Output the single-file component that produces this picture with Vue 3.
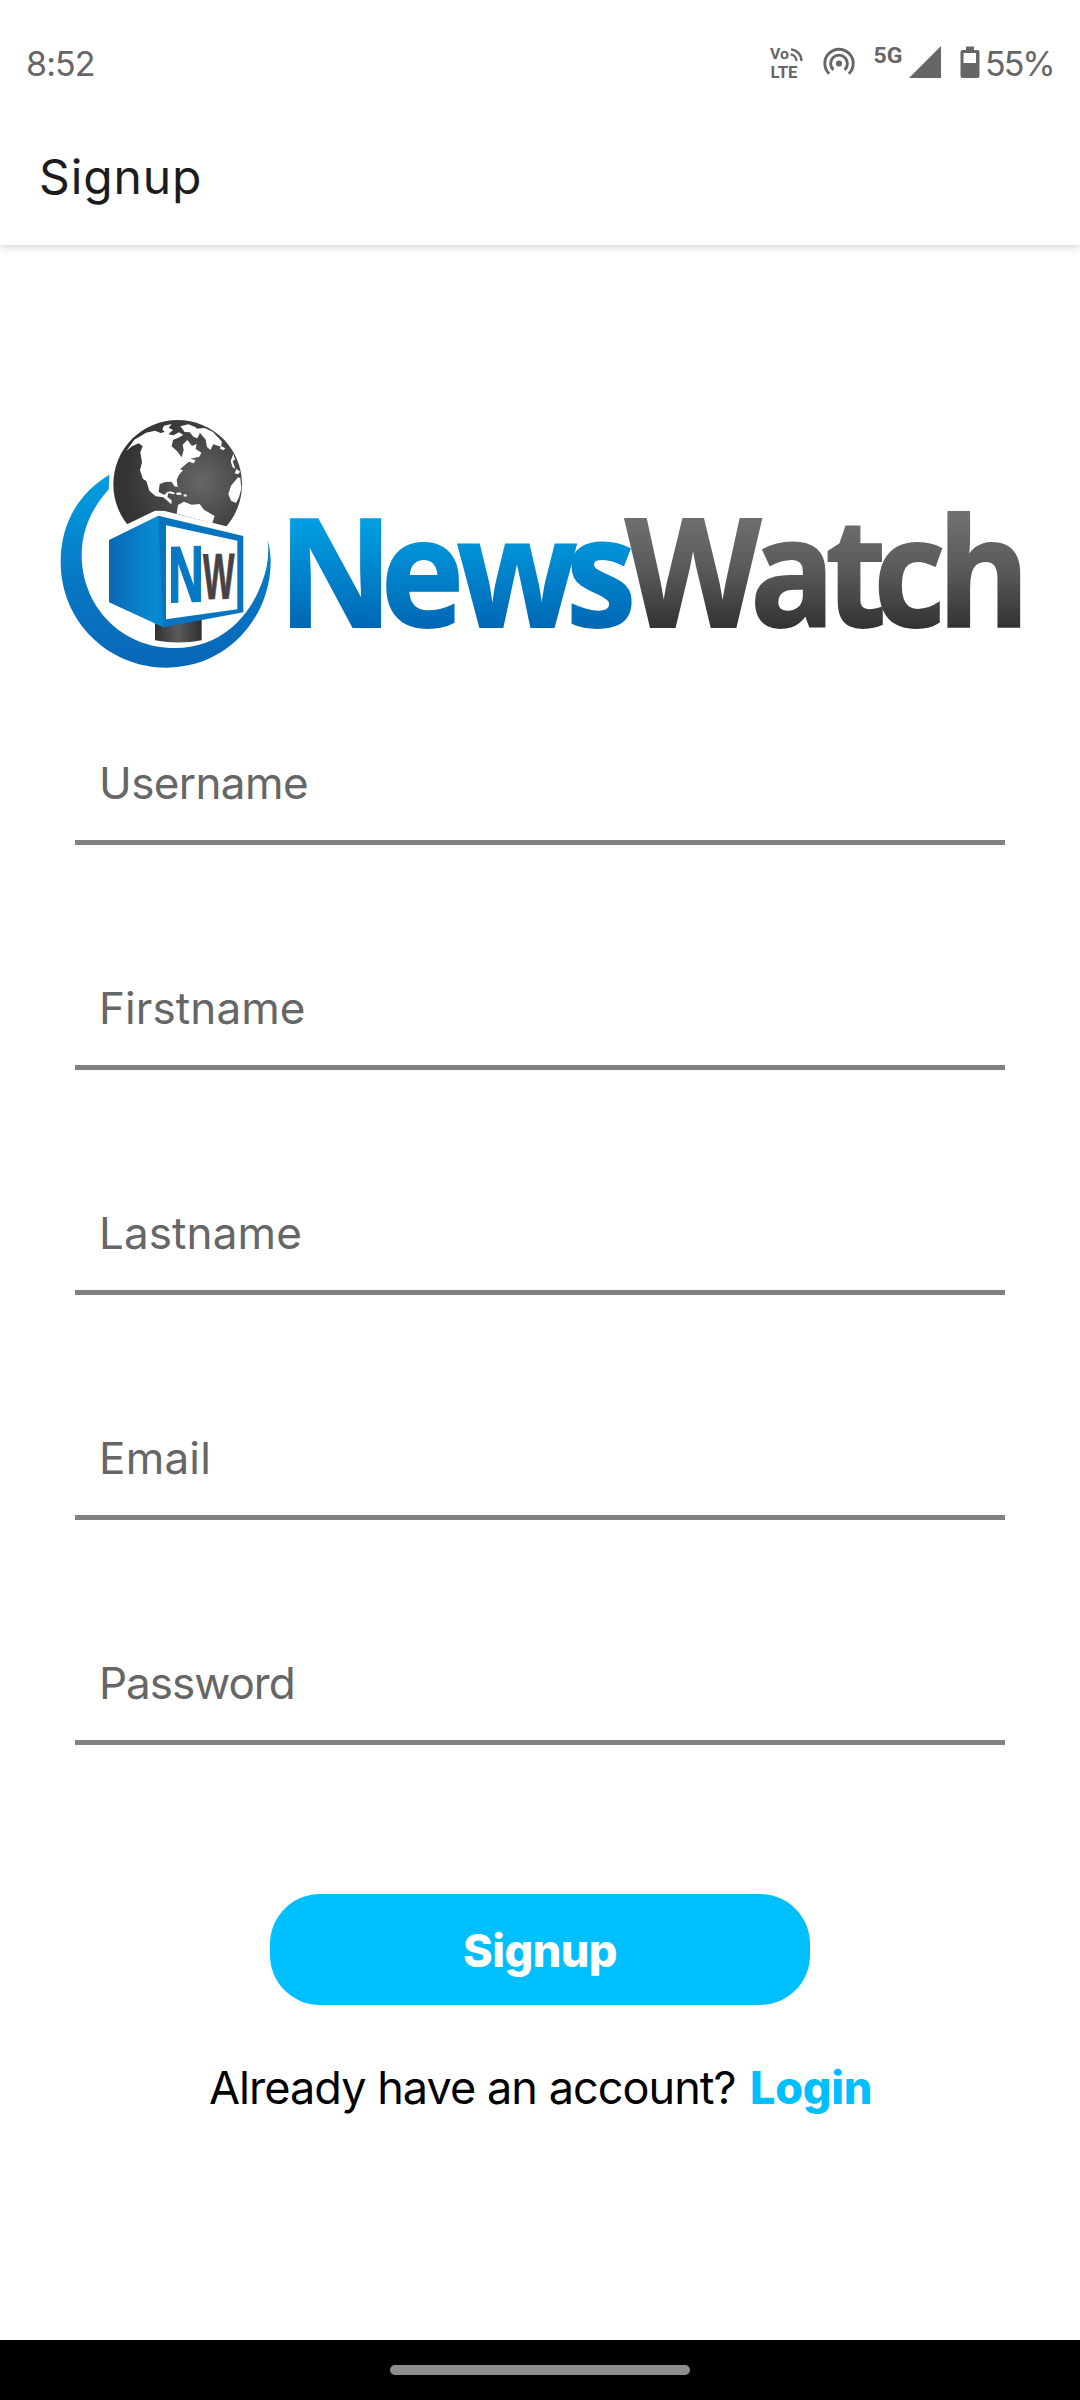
<script setup>
const fields = [
  { name: 'Username', spacing: '-0.6px' },
  { name: 'Firstname', spacing: '0.1px' },
  { name: 'Lastname', spacing: '0.1px' },
  { name: 'Email', spacing: '0.2px' },
  { name: 'Password', spacing: '-1px' },
]
</script>

<template>
  <div class="screen">
    <header class="top">
      <div class="status">
        <span class="clock">8:52</span>
        <svg class="volte" width="36" height="36" viewBox="0 0 36 36">
          <text x="1" y="15" font-size="15" textLength="19" lengthAdjust="spacingAndGlyphs">Vo</text>
          <text x="1.5" y="33.5" font-size="17" textLength="27" lengthAdjust="spacingAndGlyphs">LTE</text>
          <g fill="none" stroke="#666" stroke-width="2.3">
            <path d="M22 5.4A11.5 11.5 0 0 1 32.5 17" />
            <path d="M21.5 10.4A7 7 0 0 1 27.5 17" />
          </g>
        </svg>
        <svg class="cast" width="36" height="36" viewBox="0 0 36 36">
          <circle cx="18" cy="19.5" r="3.1" fill="#666" />
          <g fill="none" stroke="#666" stroke-width="2.9">
            <path d="M8.2 29.7A14.2 14.2 0 1 1 27.8 29.7" />
            <path d="M12.4 25.8A8.4 8.4 0 1 1 23.6 25.8" />
          </g>
        </svg>
        <svg class="signal" width="70" height="42" viewBox="0 -6 70 42">
          <text x="0.5" y="19" font-size="22.5" textLength="29" lengthAdjust="spacingAndGlyphs">5G</text>
          <path d="M36 34H68V2Z" fill="#666" />
        </svg>
        <svg class="battery" width="20" height="36" viewBox="0 0 20 36">
          <path fill="#666" fill-rule="evenodd" d="M6 2.5h8V6h3.5A2 2 0 0 1 19.500 8V32a2 2 0 0 1-2 2h-15a2 2 0 0 1-2-2V8a2 2 0 0 1 2-2H6zM3.500 9v10h12.500V9z" />
        </svg>
        <span class="percent">55%</span>
      </div>
      <h1 class="title">Signup</h1>
    </header>

    <main class="content">
      <svg class="logo" width="1000" height="290" viewBox="40 400 1000 290">
        <defs>
          <linearGradient id="blue" gradientUnits="userSpaceOnUse" x1="0" y1="520" x2="0" y2="628">
            <stop offset="0" stop-color="#009fe3" />
            <stop offset="1" stop-color="#0067b4" />
          </linearGradient>
          <linearGradient id="gray" gradientUnits="userSpaceOnUse" x1="0" y1="514" x2="0" y2="628">
            <stop offset="0" stop-color="#706f71" />
            <stop offset="0.5" stop-color="#59585a" />
            <stop offset="1" stop-color="#323133" />
          </linearGradient>
          <linearGradient id="ring" x1="0" y1="0" x2="0" y2="1">
            <stop offset="0" stop-color="#009fe0" />
            <stop offset="0.55" stop-color="#0877c4" />
            <stop offset="1" stop-color="#0867b7" />
          </linearGradient>
          <linearGradient id="side" x1="0" y1="0" x2="1" y2="0">
            <stop offset="0" stop-color="#0a69b5" />
            <stop offset="0.8" stop-color="#088bd2" />
            <stop offset="1" stop-color="#0878c3" />
          </linearGradient>
          <radialGradient id="sea" cx="0.68" cy="0.48" r="0.6">
            <stop offset="0" stop-color="#686768" />
            <stop offset="0.6" stop-color="#444345" />
            <stop offset="1" stop-color="#333234" />
          </radialGradient>
          <linearGradient id="stand" x1="0" y1="0" x2="1" y2="0">
            <stop offset="0" stop-color="#323133" />
            <stop offset="0.5" stop-color="#5b5a5b" />
            <stop offset="1" stop-color="#2f2e30" />
          </linearGradient>
        </defs>

        <g transform="translate(40 400) scale(0.33333)">
          <path fill="url(#ring)" d="M208 224C119 277 62 367 62 486C62 664 204 803 380 803C563 803 694 650 692 480Q691 447 683 420Q690 480 670 536C627 664 531 742 409 744C243 746 124 617 125 462C126 384 159 321 206 268Z" />
          <circle cx="413" cy="253" r="193" fill="url(#sea)" />
          <g fill="#fff">
            <path d="M259 153L283 119L318 98L345 92L362 99L374 96L367 88L372 77L395 72L386 83L399 90L385 103L400 106L417 97L430 105L415 113L399 120L395 139L410 152L425 172L431 150L428 134L442 120L456 138L470 132L467 147L484 158L478 170L451 176L467 180L461 190L447 185L432 197L420 208L429 211L417 224L410 239L413 261L403 259L395 245L376 246L359 252L356 276L372 284L386 276L382 291L395 301L394 313L370 292L347 289L328 272L319 243L309 237L300 211L306 187L301 157L308 139L296 130L276 139Z" />
            <path d="M421 79L445 73L467 82L480 99L472 115L461 111L449 97L434 96Z" />
            <path d="M468 86L494 84L519 96L546 125L543 140L520 133L511 150L501 141L497 119L482 101Z" />
            <path d="M543 138L556 145L550 151L540 146ZM580 161L585 179L578 183L586 207L578 202L572 184ZM589 207L601 215L594 223L584 220Z" />
            <path d="M601 234L594 232L573 257L565 282L573 302L588 309L597 292L604 266Z" />
            <path d="M414 315L432 305L455 314L479 312L492 329L524 348L517 369L410 341Z" />
            <path d="M376 279L391 274L405 279L401 283L388 280ZM407 279L421 277L426 284L412 285ZM431 283L441 284L439 290L431 289Z" />
          </g>
          <path fill="#fff" d="M190 413L258 374L345 332L374 333L632 397L632 440H190Z" />
          <path fill="url(#stand)" d="M345 670L485 655V721Q417 734 345 721Z" />
          <path fill="url(#side)" d="M207 420L355 347L385 360V680L370 682L207 607Z" />
          <path fill="#0874bf" d="M355 347L610 408V637L370 682Z" />
          <path fill="#fff" d="M378 376L592 422V628L378 658Z" />
          <g font-family="'Liberation Sans', Arial, sans-serif" font-weight="700">
            <text transform="translate(385 607) skewY(-2) scale(0.62 1)" font-size="238" fill="#0779c4" stroke="#0779c4" stroke-width="5">N</text>
            <text transform="translate(489 597) skewY(-1) scale(0.515 1)" font-size="194" fill="#484244" stroke="#484244" stroke-width="3">W</text>
          </g>
        </g>

        <g class="wordmark" transform="scale(0.94 1)">
          <text fill="url(#blue)" stroke="url(#blue)" x="296 405 486 602" y="627">News</text>
          <text fill="url(#gray)" stroke="url(#gray)" x="665 798 878 929 997" y="627">Watch</text>
        </g>
      </svg>

      <form class="form" @submit.prevent>
        <label v-for="f in fields" :key="f.name" class="field">
          <span :style="{ letterSpacing: f.spacing }">{{ f.name }}</span>
        </label>
        <button class="submit" type="submit">Signup</button>
      </form>
      <p class="prompt"><span class="ask">Already have an account?</span><a class="login">Login</a></p>
    </main>

    <footer class="nav"><i></i></footer>
  </div>
</template>

<style>
body { background: #fff; }
</style>

<style scoped>
* { box-sizing: border-box; }
.screen {
  width: 1080px;
  height: 2400px;
  display: flex;
  flex-direction: column;
  background: #fff;
  font-family: Inter, "Liberation Sans", sans-serif;
  overflow: hidden;
}
.top {
  flex: none;
  height: 245px;
  box-shadow: 0 2px 9px rgba(0, 0, 0, 0.18);
}
.status {
  display: flex;
  align-items: flex-start;
  height: 128px;
  padding: 44px 0 0 26px;
  color: #666;
}
.status svg { flex: none; }
.status text { fill: #666; font-weight: 700; font-family: Roboto, sans-serif; }
.clock, .percent { font-size: 34px; line-height: 39px; white-space: nowrap; }
.clock { width: 742px; letter-spacing: -0.9px; }
.volte { margin-left: 1px; }
.cast { margin-left: 16px; }
.signal { margin: -6px 0 0 16px; }
.battery { margin-left: 17px; }
.percent { margin-left: 5px; letter-spacing: -2px; }
.title {
  margin: 0 0 0 39px;
  font-size: 48px;
  line-height: 97px;
  font-weight: 400;
  letter-spacing: 0.9px;
  color: #1c1c1e;
}
.content { flex: 1; display: flex; flex-direction: column; }
.logo { margin: 155px 0 0 40px; flex: none; }
.wordmark {
  font-family: "Open Sans", "Noto Sans", sans-serif;
  font-weight: 700;
  font-size: 150px;
  stroke-width: 1.8px;
}
.form { display: flex; flex-direction: column; padding: 38px 75px 0; }
.field {
  height: 117px;
  margin-bottom: 108px;
  padding: 25px 0 0 24px;
  border-bottom: 5px solid #818181;
  font-size: 44px;
  line-height: 60px;
  color: #666;
}
.submit {
  align-self: center;
  width: 540px;
  height: 111px;
  margin-top: 41px;
  padding: 2px 0 0;
  border: 0;
  border-radius: 50px;
  background: #00bfff;
  color: #fff;
  font-family: inherit;
  font-size: 45px;
  line-height: 109px;
  font-weight: 800;
  letter-spacing: -0.5px;
}
.prompt {
  display: flex;
  justify-content: space-between;
  margin: 53px 208px 0 209px;
  font-size: 45px;
  line-height: 60px;
  color: #000;
  white-space: nowrap;
}
.ask { letter-spacing: -0.95px; }
.login { color: #00bfff; font-weight: 800; letter-spacing: -0.3px; }
.nav {
  flex: none;
  height: 60px;
  display: flex;
  align-items: center;
  justify-content: center;
  background: #000;
}
.nav i { width: 300px; height: 10px; border-radius: 5px; background: #8d8d8d; }
</style>
